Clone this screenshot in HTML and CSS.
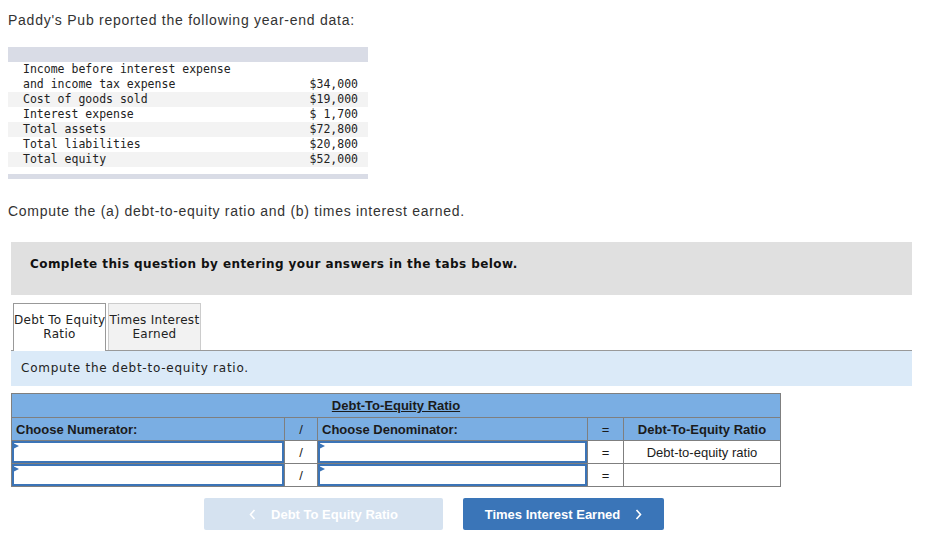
FILE: index.html
```html
<!DOCTYPE html>
<html lang="en">
<head>
<meta charset="utf-8">
<title>Paddy's Pub</title>
<link rel="stylesheet" href="styles.css">
</head>
<body>
<p class="intro">Paddy's Pub reported the following year-end data:</p>
<div class="data">
  <div class="data-bar"></div>
  <table class="data-table">
    <tr><td>Income before interest expense<br>and income tax expense</td><td class="val">$34,000</td></tr>
    <tr><td>Cost of goods sold</td><td class="val">$19,000</td></tr>
    <tr><td>Interest expense</td><td class="val">$ 1,700</td></tr>
    <tr><td>Total assets</td><td class="val">$72,800</td></tr>
    <tr><td>Total liabilities</td><td class="val">$20,800</td></tr>
    <tr><td>Total equity</td><td class="val">$52,000</td></tr>
  </table>
  <div class="data-gap"></div>
  <div class="data-bar bottom"></div>
</div>
<p class="ask">Compute the (a) debt-to-equity ratio and (b) times interest earned.</p>
<div class="widget">
  <div class="notice">Complete this question by entering your answers in the tabs below.</div>
  <div class="tabs">
    <div class="tab active">Debt To Equity<br>Ratio</div>
    <div class="tab">Times Interest<br>Earned</div>
  </div>
  <div class="instr">Compute the debt-to-equity ratio.</div>
  <table class="ratio">
    <colgroup>
      <col class="c-num"><col class="c-op"><col class="c-den"><col class="c-eq"><col class="c-res">
    </colgroup>
    <tr class="h1"><th colspan="5"><span class="u">Debt-To-Equity Ratio</span></th></tr>
    <tr class="h2">
      <th class="left">Choose Numerator:</th>
      <th class="op">/</th>
      <th class="left">Choose Denominator:</th>
      <th class="op">=</th>
      <th>Debt-To-Equity Ratio</th>
    </tr>
    <tr class="r">
      <td class="inp"><div class="box"></div></td>
      <td class="op">/</td>
      <td class="inp"><div class="box"></div></td>
      <td class="op">=</td>
      <td class="res">Debt-to-equity ratio</td>
    </tr>
    <tr class="r">
      <td class="inp"><div class="box"></div></td>
      <td class="op">/</td>
      <td class="inp"><div class="box"></div></td>
      <td class="op">=</td>
      <td class="res"></td>
    </tr>
  </table>
  <div class="nav">
    <button class="btn prev"><svg width="7" height="11" viewBox="0 0 7 11"><path d="M5.5 1 L1.5 5.5 L5.5 10" fill="none" stroke="#fff" stroke-width="1.6"/></svg><span>Debt To Equity Ratio</span></button>
    <button class="btn next"><span>Times Interest Earned</span><svg width="7" height="11" viewBox="0 0 7 11"><path d="M1.5 1 L5.5 5.5 L1.5 10" fill="none" stroke="#fff" stroke-width="1.6"/></svg></button>
  </div>
</div>
</body>
</html>
```
FILE: styles.css
```css
html, body { margin: 0; padding: 0; background: #fff; }
body {
  padding: 0 8px;
  font-family: "Liberation Sans", Arial, sans-serif;
  color: #333;
}
.intro {
  margin: 0;
  padding-top: 11px;
  font-size: 14px;
  letter-spacing: 0.75px;
  line-height: 18px;
}
.data { margin-top: 18px; width: 360px; }
.data-bar { height: 15px; background: #d9dce6; }
.data-bar.bottom { height: 5px; }
.data-gap { height: 7px; }
.data-table {
  width: 100%;
  border-collapse: collapse;
  font-family: "DejaVu Sans Mono", "Liberation Mono", monospace;
  font-size: 11.5px;
  line-height: 15px;
  color: #222;
}
.data-table td { padding: 0 0 0 15px; vertical-align: bottom; }
.data-table td.val { text-align: right; padding: 0 10px 0 0; }
.data-table tr:nth-child(even) { background: #f3f3f3; }
.ask {
  margin: 23px 0 0;
  font-size: 14px;
  letter-spacing: 0.72px;
  line-height: 18px;
}
.widget { margin: 22px 0 0 3px; width: 901px; }
.notice {
  height: 53px;
  box-sizing: border-box;
  padding: 14px 19px 0;
  background: #e0e0e0;
  font-family: "DejaVu Sans", Verdana, sans-serif;
  font-weight: bold;
  font-size: 12px;
  letter-spacing: 0.42px;
  line-height: 16px;
  color: #111;
}
.tabs {
  margin-top: 8px;
  display: flex;
  gap: 2px;
  padding-left: 2px;
  border-bottom: 1px solid #999;
  height: 47px;
}
.tab {
  width: 93px;
  height: 47px;
  box-sizing: border-box;
  border: 1px solid #ccc;
  border-bottom: none;
  background: #f2f2f2;
  font-family: "DejaVu Sans", Verdana, sans-serif;
  font-size: 12px;
  letter-spacing: 0.3px;
  line-height: 14px;
  text-align: center;
  padding-top: 9px;
  color: #222;
  white-space: nowrap;
}
.tab.active {
  background: #fff;
  border-color: #999;
  height: 48px;
  margin-bottom: -1px;
}
.instr {
  height: 35px;
  background: #dbeaf8;
  padding-left: 10px;
  font-family: "DejaVu Sans", Verdana, sans-serif;
  font-size: 12px;
  letter-spacing: 0.75px;
  line-height: 35px;
  color: #222;
}
.ratio {
  margin-top: 7px;
  width: 769px;
  table-layout: fixed;
  border-collapse: collapse;
  border: 1px solid #7f7f7f;
  font-family: "Liberation Sans", Arial, sans-serif;
  font-size: 13px;
  color: #1b1b1b;
}
.c-num { width: 273px; }
.c-op { width: 33px; }
.c-den { width: 270px; }
.c-eq { width: 36px; }
.c-res { width: 157px; }
.ratio th, .ratio td {
  border: 1px solid #7f7f7f;
  padding: 0;
  text-align: center;
}
.ratio th { background: #7aaee3; font-weight: bold; }
.ratio th.op { font-weight: normal; }
.ratio th.left { text-align: left; padding-left: 4px; }
.h1 th { height: 23px; }
.h1 .u { text-decoration: underline; }
.h2 th { height: 22px; }
.r td { height: 22px; background: #fff; }
.ratio td.inp { position: relative; padding: 0; }
.box {
  height: 22px;
  box-sizing: border-box;
  border: 2px solid #3b74b7;
  background: #fff;
}
.ratio td.inp::before {
  content: "";
  position: absolute;
  left: 1px;
  top: 2px;
  border-left: 6px solid #3b74b7;
  border-top: 3px solid transparent;
  border-bottom: 3px solid transparent;
}
.nav {
  margin: 11px 0 0 193px;
  display: flex;
  gap: 20px;
}
.btn {
  height: 32px;
  border: none;
  border-radius: 2px;
  display: flex;
  align-items: center;
  justify-content: center;
  gap: 15px;
  font-family: "Liberation Sans", Arial, sans-serif;
  font-weight: bold;
  font-size: 13px;
  color: #fff;
  padding: 0;
}
.btn.prev { width: 239px; background: #d5e2f0; }
.btn.next { width: 201px; background: #3a75b8; }
```
